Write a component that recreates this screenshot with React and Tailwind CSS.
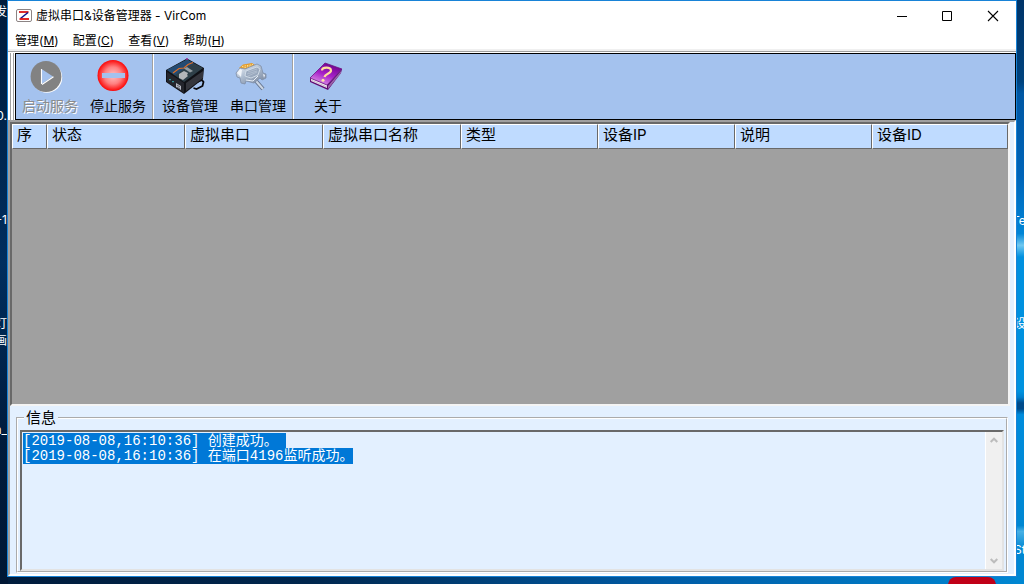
import { useEffect, useRef } from "react";

const LOG = "[2019-08-08,16:10:36] 创建成功。\n[2019-08-08,16:10:36] 在端口4196监听成功。";

const MENUS = [
  ["管理", "M"],
  ["配置", "C"],
  ["查看", "V"],
  ["帮助", "H"],
];

const COLUMNS = [
  ["序", "w-[35px]"],
  ["状态", "w-[138px]"],
  ["虚拟串口", "w-[138px]"],
  ["虚拟串口名称", "w-[138px]"],
  ["类型", "w-[137px]"],
  ["设备IP", "w-[137px]"],
  ["说明", "w-[137px]"],
  ["设备ID", ""],
];

function AppIcon() {
  return (
    <svg className="h-4 w-4" viewBox="0 0 16 16" aria-hidden="true">
      <rect x=".5" y="1.500" width="15" height="12" rx="1.500" fill="#fff" stroke="#8c8484" />
      <path d="M3 4H12.500" stroke="#d81818" strokeWidth="1.800" />
      <path d="M12 4.500L4.500 10.500" stroke="#14148c" strokeWidth="1.600" />
      <path d="M3.500 11H13" stroke="#e01010" strokeWidth="1.800" />
    </svg>
  );
}

function PlayIcon() {
  return (
    <svg className="h-10 w-10" viewBox="0 0 40 40" aria-hidden="true">
      <circle cx="21" cy="21.500" r="15.200" fill="#fff" />
      <circle cx="20" cy="20.500" r="15.400" fill="#828282" />
      <path d="M15.500 13V28L27 20.500Z" fill="#a4c2ee" />
      <path d="M15.500 13V28M16 28.500L27.500 20.800" fill="none" stroke="#fff" strokeWidth="1.100" />
    </svg>
  );
}

function StopIcon() {
  return (
    <svg className="h-10 w-10" viewBox="0 0 40 40" aria-hidden="true">
      <defs>
        <radialGradient id="stopFill" cx=".5" cy=".5" r=".5">
          <stop offset="0" stopColor="#ffc4c4" />
          <stop offset=".55" stopColor="#ff8080" />
          <stop offset="1" stopColor="#fb0808" />
        </radialGradient>
      </defs>
      <circle cx="19" cy="19.500" r="15.500" fill="url(#stopFill)" />
      <rect x="8" y="17" width="23" height="5" fill="#a4c2ee" />
    </svg>
  );
}

function DeviceIcon() {
  return (
    <svg className="h-10 w-10" viewBox="0 0 40 40" aria-hidden="true">
      <path d="M27 28l9-4 1.500 2-1 4-6 3-3-1" fill="none" stroke="#08080c" strokeWidth="1.800" />
      <path d="M0 14L21 2.500 38 12 37 23 18 38 0 26Z" fill="#101116" />
      <path d="M1 14L21 3.500 37 12 18 26Z" fill="#2f4049" />
      <path d="M1 14L21 3.500 28 7 15 15 9 19Z" fill="#244b73" />
      <path d="M1 16L18 27V37L1 26Z" fill="#24252c" />
      <path d="M20 27L37 15V22L20 35Z" fill="#34353c" />
      <path d="M7 17L13 12.500 18 12 22 8.500 27 6.500" fill="none" stroke="#e06c22" strokeWidth="1.200" />
      <path d="M13 18l5-3 4 2-1 2 1 1-5 4-4-2z" fill="#b4b7ba" />
      <path d="M18 12.500l3-1.500 6 4-3 1.500z" fill="#949da2" />
      <path d="M10 27l5 3v4l-5-3z" fill="#b8bac4" />
      <path d="M11 29l3 2M11 31l3 2" stroke="#383a45" strokeWidth=".7" />
      <path d="M4 23v1.200M7 25v1.200" stroke="#42e0e8" strokeWidth="1.200" />
      <circle cx="21" cy="3" r="1" fill="#a030a0" />
    </svg>
  );
}

function SerialIcon() {
  return (
    <svg className="h-10 w-10" viewBox="0 0 40 40" aria-hidden="true">
      <defs>
        <linearGradient id="plugFill" x1="0" y1="0" x2=".8" y2="1">
          <stop offset="0" stopColor="#f2f5fa" />
          <stop offset=".5" stopColor="#aebdd0" />
          <stop offset="1" stopColor="#7c899f" />
        </linearGradient>
      </defs>
      <path d="M22 25L29 33" stroke="#66758e" strokeWidth="4" />
      <path d="M22 25L29 33" stroke="#cbd6e4" strokeWidth="2" />
      <path d="M5 12L9 8.500 18 7 21 9 11 14Z" fill="#e59b2a" />
      <path d="M8 10.500l11-2M8 12.500l10-3" stroke="#fae39a" strokeDasharray="1.500 1" />
      <path d="M2 17L6 12 11 13 23 8 27 10 29 17 32 18 32 22 28 24 26 22 20 27 12 25 11 28 7 27 6 22 3 21Z" fill="url(#plugFill)" stroke="#7f8ea6" strokeWidth=".8" />
      <path d="M12 15L23 11 26 13 24 19 17 22 11 20Z" fill="#9aa9be" stroke="#dbe4ef" strokeWidth=".8" />
      <path d="M14 16l9-3M13 18l10-3M14 20l9-4" stroke="#b5c2d2" strokeWidth=".8" />
      <path d="M3 17l3-4 2 1-1 7zM29 18l2 1-1 3" fill="#f0f4f9" />
      <path d="M12 24l7 1 5-5" fill="none" stroke="#e6edf5" />
    </svg>
  );
}

function BookIcon() {
  return (
    <svg className="h-10 w-10" viewBox="0 0 40 40" aria-hidden="true">
      <defs>
        <linearGradient id="bookFill" x1=".7" y1="0" x2=".2" y2="1">
          <stop offset="0" stopColor="#6a0088" />
          <stop offset=".5" stopColor="#a620c8" />
          <stop offset="1" stopColor="#e5a0ec" />
        </linearGradient>
      </defs>
      <path d="M6 22L23 29 38 13 37 17 24 34 6 26Z" fill="#600b72" />
      <path d="M7 22L23 29V32L7 25Z" fill="#f4edf4" />
      <path d="M24 30L37 15V17L24 33Z" fill="#9a65a8" />
      <path d="M6 22L21 7 38 13 23 29Z" fill="url(#bookFill)" stroke="#6b157d" strokeWidth=".8" />
      <path d="M7 24l16 7" stroke="#bba7be" strokeWidth=".7" />
      <path d="M18 14.500C18 11 27 10.500 27 14.500C27 18 21 17.500 20.500 21" fill="none" stroke="#ffdf9c" strokeWidth="2.200" />
      <circle cx="19" cy="24.200" r="1.500" fill="#ffe3a8" />
    </svg>
  );
}

function ToolButton({ label, icon, disabled }) {
  return (
    <button
      type="button"
      disabled={disabled}
      className="flex w-[68px] flex-col items-center justify-start pt-0.5 text-sm leading-[18px] text-black disabled:text-[#8c8c8c] disabled:[text-shadow:1px_1px_0_#fff]"
    >
      <span className="mr-2">{icon}</span>
      <span className="whitespace-nowrap">{label}</span>
    </button>
  );
}

function Separator() {
  return <div className="w-0.5 border-l border-r border-l-[#a0a0a0] border-r-white" />;
}

function Chevron({ down }) {
  return (
    <svg className="h-2 w-2" viewBox="0 0 8 8" aria-hidden="true">
      <path d={down ? "M.7 2L4 5.300 7.300 2" : "M.7 6L4 2.700 7.300 6"} fill="none" stroke="#bcbcbc" strokeWidth="2" />
    </svg>
  );
}

function LogBox() {
  const ref = useRef(null);
  useEffect(() => {
    ref.current.focus();
    ref.current.setSelectionRange(0, LOG.length);
  }, []);
  return (
    <div className="flex h-[141px] border-2 border-t-[#696969] border-r-[#e3e3e3] border-b-[#e3e3e3] border-l-[#696969]">
      <textarea
        ref={ref}
        readOnly
        aria-label="信息"
        defaultValue={LOG}
        className="min-w-0 flex-1 resize-none overflow-hidden bg-transparent px-px pt-0.5 font-['Liberation_Mono','Noto_Sans_CJK_SC',monospace] text-sm leading-[15px] text-black caret-transparent outline-none selection:bg-[#0078d7] selection:text-white"
      />
      <div className="flex w-[17px] flex-col items-center justify-between border-l border-white bg-[#f0f0f0] py-1">
        <button type="button" aria-label="向上滚动"><Chevron /></button>
        <button type="button" aria-label="向下滚动"><Chevron down /></button>
      </div>
    </div>
  );
}

function DesktopEdges() {
  const label = "absolute whitespace-nowrap text-xs leading-4 text-white";
  return (
    <div className="absolute inset-0 overflow-hidden bg-[linear-gradient(90deg,#001c3c,#00264d_30%,#005ca6_65%,#0087d2)]">
      <div className="absolute inset-y-0 left-0 w-2 overflow-hidden bg-[linear-gradient(#001c3c,#002e5e_45%,#001b3c_75%,#001734)]">
        <span className={`${label} top-1 right-px`}>发</span>
        <span className={`${label} top-[108px] right-px`}>0.</span>
        <span className={`${label} top-[212px] right-px`}>-1</span>
        <span className={`${label} top-[316px] right-px`}>灯</span>
        <span className={`${label} top-[333px] right-px`}>画</span>
        <span className={`${label} top-[422px] right-px`}>n_</span>
      </div>
      <div className="absolute inset-y-0 right-0 w-2 overflow-hidden bg-[linear-gradient(#003468,#00437e_14%,#0057a3_16%,#0064b8_30%,#0085d6_40%,#70c8f0_42%,#0090df_44%,#0092df_67%,#0080ce_68%,#004b8b_69%,#004b8b_70%,#008cdc_71%,#0087d2_90%,#48b0e4_91%,#0087d2_94%)]">
        <span className={`${label} top-[213px] -left-1`}>Te</span>
        <span className={`${label} top-[316px] -left-0.5`}>设</span>
        <span className={`${label} top-[542px] -left-0.5`}>St</span>
      </div>
      <div className="absolute right-7 -bottom-3 h-[19px] w-12 rounded-lg bg-[#c00018]" />
    </div>
  );
}

export default function App() {
  return (
    <div className="relative flex min-h-screen flex-col px-[7px] pb-[7px] font-['Inter','Noto_Sans_CJK_SC',sans-serif]">
      <DesktopEdges />
      <main className="relative flex flex-1 flex-col border border-[#1883d7] bg-white text-black">
        <header className="flex h-[29px] items-center pl-2">
          <AppIcon />
          <h1 className="ml-1 flex-1 text-xs">虚拟串口&amp;设备管理器 - VirCom</h1>
          <button type="button" aria-label="最小化" className="flex h-full w-[45px] items-center justify-center">
            <svg className="h-3 w-3" viewBox="0 0 12 12"><path d="M1 6.500H11" stroke="#000" /></svg>
          </button>
          <button type="button" aria-label="最大化" className="flex h-full w-[46px] items-center justify-center">
            <svg className="h-3 w-3" viewBox="0 0 12 12"><path d="M1.500 1.500H10.500V10.500H1.500Z" fill="none" stroke="#000" /></svg>
          </button>
          <button type="button" aria-label="关闭" className="flex h-full w-[46px] items-center justify-center">
            <svg className="h-3 w-3" viewBox="0 0 12 12"><path d="M1 1L11 11M11 1L1 11" stroke="#000" strokeWidth="1.100" /></svg>
          </button>
        </header>

        <nav className="flex h-[19px] items-end gap-3.5 pl-[7px] text-xs leading-4">
          {MENUS.map(([name, key]) => (
            <button type="button" key={key}>
              {name}(<u>{key}</u>)
            </button>
          ))}
        </nav>
        <div className="h-1 border-t-2 border-b border-t-[#f0f0f0] border-b-white bg-[#a0a0a0]" />

        <div className="flex h-[67px]">
          <div className="flex w-[7px] justify-center gap-0.5 bg-white">
            <div className="w-px bg-[#a0a0a0]" />
            <div className="w-px bg-[#a0a0a0]" />
          </div>
          <div role="toolbar" className="flex flex-1 border border-black bg-[#a4c2ee] font-['Noto_Sans_CJK_SC',sans-serif]">
            <ToolButton label="启动服务" icon={<PlayIcon />} disabled />
            <ToolButton label="停止服务" icon={<StopIcon />} />
            <Separator />
            <div className="flex pl-0.5">
              <ToolButton label="设备管理" icon={<DeviceIcon />} />
              <ToolButton label="串口管理" icon={<SerialIcon />} />
            </div>
            <Separator />
            <ToolButton label="关于" icon={<BookIcon />} />
          </div>
        </div>

        <div className="flex flex-1 flex-col border-2 border-t-[#a0a0a0] border-r-white border-b-white border-l-[#a0a0a0] bg-[#e3f0ff]">
          <section className="mr-1 flex-1 border-2 border-t-[#696969] border-r-[#f4f4f4] border-b-[#f4f4f4] border-l-[#696969] bg-[#a0a0a0]">
            <table className="w-full table-fixed border-separate border-spacing-0">
              <thead>
                <tr>
                  {COLUMNS.map(([name, width]) => (
                    <th
                      key={name}
                      scope="col"
                      className={`${width} h-[25px] border border-t-white border-r-[#696969] border-b-[#696969] border-l-white bg-[#bfdbff] px-1 pt-0 pb-[3px] text-left text-[15px] leading-5 font-normal whitespace-nowrap`}
                    >
                      {name}
                    </th>
                  ))}
                </tr>
              </thead>
            </table>
          </section>

          <section className="flex h-[168px] flex-col px-1.5 pt-1 pb-0.5">
            <fieldset className="flex-1 border-2 border-white px-0.5 pt-1 [border-style:groove]">
              <legend className="ml-1 px-0.5 text-[15px] leading-4">信息</legend>
              <LogBox />
            </fieldset>
          </section>
        </div>
      </main>
    </div>
  );
}
